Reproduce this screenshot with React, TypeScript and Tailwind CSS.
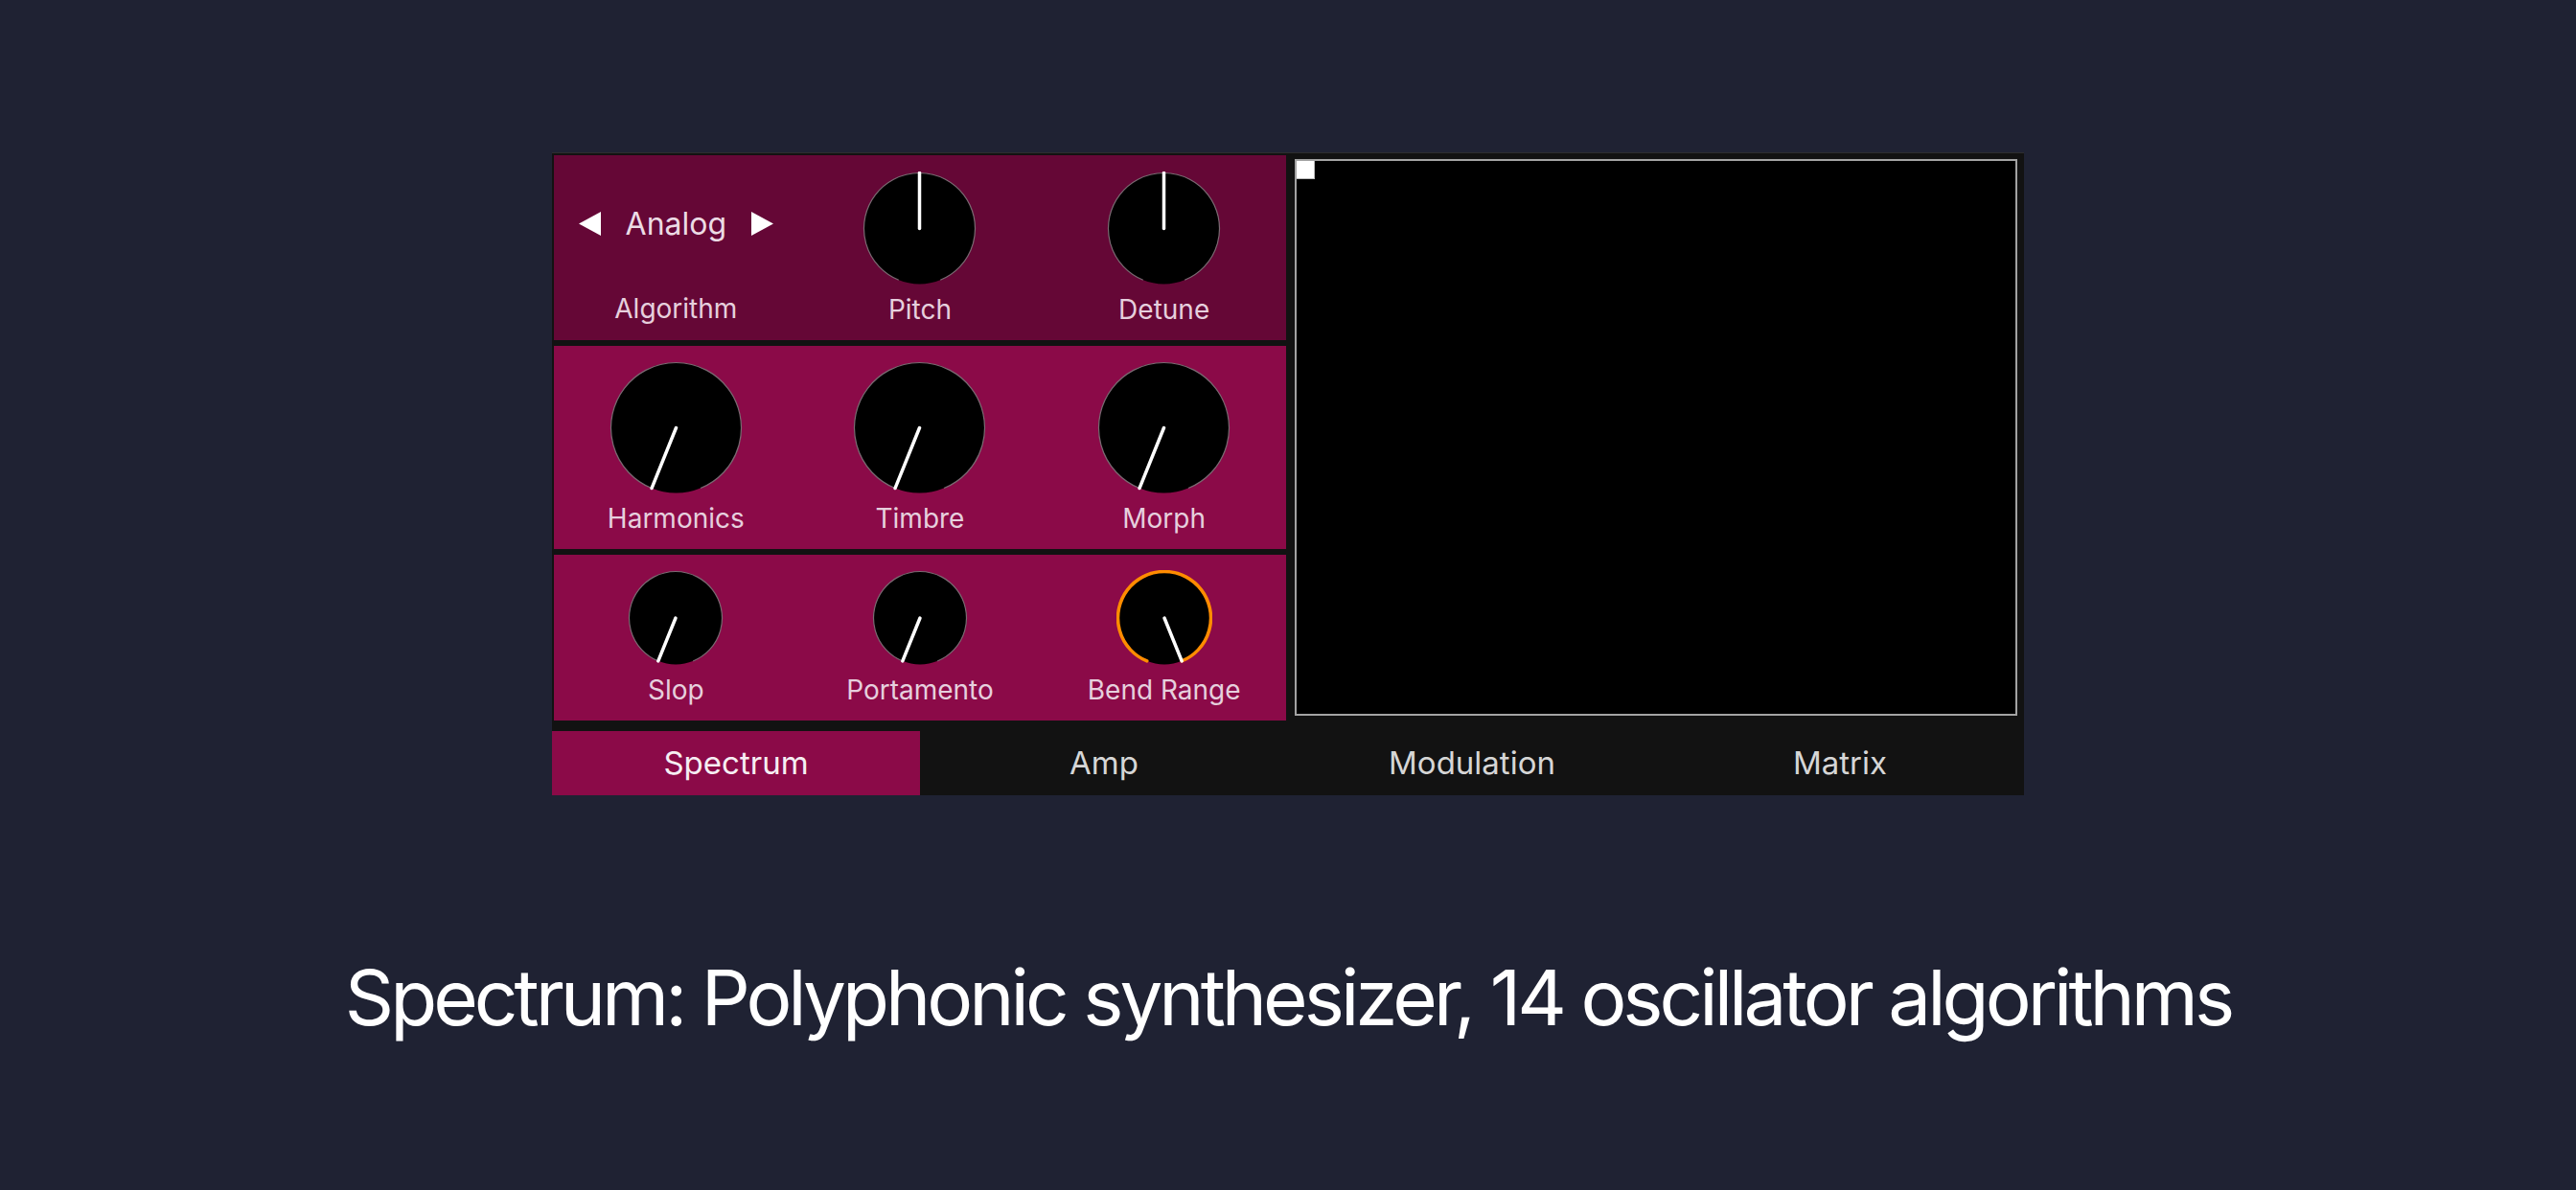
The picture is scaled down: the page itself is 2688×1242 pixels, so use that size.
import React from "react";

const font = { fontFamily: "Inter, 'Noto Sans', sans-serif" };

function polar(cx: number, cy: number, r: number, deg: number) {
  const a = ((deg - 90) * Math.PI) / 180;
  return [cx + r * Math.cos(a), cy + r * Math.sin(a)];
}

function arc(cx: number, cy: number, r: number, from: number, to: number) {
  const [x1, y1] = polar(cx, cy, r, from);
  const [x2, y2] = polar(cx, cy, r, to);
  const large = to - from > 180 ? 1 : 0;
  return `M ${x1} ${y1} A ${r} ${r} 0 ${large} 1 ${x2} ${y2}`;
}

function Knob({ size, angle, active = false }: { size: number; angle: number; active?: boolean }) {
  const c = size / 2;
  const r = size / 2 - 1.5;
  const [px, py] = polar(c, c, r, angle);
  return (
    <svg width={size} height={size} viewBox={`0 0 ${size} ${size}`} className="block">
      <circle cx={c} cy={c} r={r} fill="#000" />
      <path d={arc(c, c, r, -158, 158)} stroke="#7a6a72" strokeWidth={1.2} fill="none" />
      {active ? (
        <path d={arc(c, c, r, -158, angle)} stroke="#ff8c00" strokeWidth={3.5} fill="none" strokeLinecap="round" />
      ) : null}
      <line x1={c} y1={c} x2={px} y2={py} stroke="#fff" strokeWidth={3.5} strokeLinecap="round" />
    </svg>
  );
}

function KnobCell({ label, size, angle, active }: { label: string; size: number; angle: number; active?: boolean }) {
  return (
    <div className="flex flex-col items-center">
      <Knob size={size} angle={angle} active={active} />
      <span className="mt-[8px] text-[28px] leading-[34px] text-[#e6cfdd]">{label}</span>
    </div>
  );
}

function Triangle({ dir }: { dir: "left" | "right" }) {
  return (
    <svg width="23" height="25" viewBox="0 0 23 25" className="block">
      <polygon points={dir === "left" ? "23,0 23,25 0,12.5" : "0,0 0,25 23,12.5"} fill="#fff" />
    </svg>
  );
}

const tabs = ["Spectrum", "Amp", "Modulation", "Matrix"];

export default function App() {
  return (
    <div className="flex h-[1242px] w-full flex-col items-center bg-[#1f2233]" style={font}>
      <div className="mt-[159px] flex w-[1536px] flex-col border-t border-[#2e2e2e] bg-[#121212]">
        <div className="flex pb-[11px] pl-[2px] pt-[2px]">
          <div className="flex w-[764px] flex-col gap-[6px]">
            <div className="grid h-[193px] grid-cols-3 bg-[#650736] pt-[17px]">
              <div className="flex flex-col items-center">
                <div className="flex h-[118px] items-center gap-[26px] pb-[9px]">
                  <Triangle dir="left" />
                  <span className="text-[32px] leading-[32px] text-[#ecdbe5]">Analog</span>
                  <Triangle dir="right" />
                </div>
                <span className="mt-[8px] text-[28px] leading-[34px] text-[#e6cfdd]">Algorithm</span>
              </div>
              <KnobCell label="Pitch" size={119} angle={0} />
              <KnobCell label="Detune" size={119} angle={0} />
            </div>
            <div className="grid h-[212px] grid-cols-3 bg-[#8b0a48] pt-[16px]">
              <KnobCell label="Harmonics" size={139} angle={-158} />
              <KnobCell label="Timbre" size={139} angle={-158} />
              <KnobCell label="Morph" size={139} angle={-158} />
            </div>
            <div className="grid h-[173px] grid-cols-3 bg-[#8b0a48] pt-[16px]">
              <KnobCell label="Slop" size={100} angle={-158} />
              <KnobCell label="Portamento" size={100} angle={-158} />
              <KnobCell label="Bend Range" size={100} angle={158} active />
            </div>
          </div>
          <div className="ml-[9px] mt-[4px] h-[581px] w-[754px] border-2 border-[#a3a3a3] bg-black">
            <div className="h-[19px] w-[19px] border-b border-r border-[#bbbbbb] bg-white" />
          </div>
        </div>
        <div className="grid h-[67px] grid-cols-4">
          {tabs.map((t, i) => (
            <div
              key={t}
              className={
                i === 0
                  ? "flex items-center justify-center bg-[#8b0a48] text-[33px] text-[#f6eef3]"
                  : "flex items-center justify-center text-[33px] text-[#d6d6d6]"
              }
            >
              {t}
            </div>
          ))}
        </div>
      </div>
      <p className="mt-[171px] text-[80px] leading-[80px] tracking-[-0.05em] text-white">
        Spectrum: Polyphonic synthesizer, 14 oscillator algorithms
      </p>
    </div>
  );
}
